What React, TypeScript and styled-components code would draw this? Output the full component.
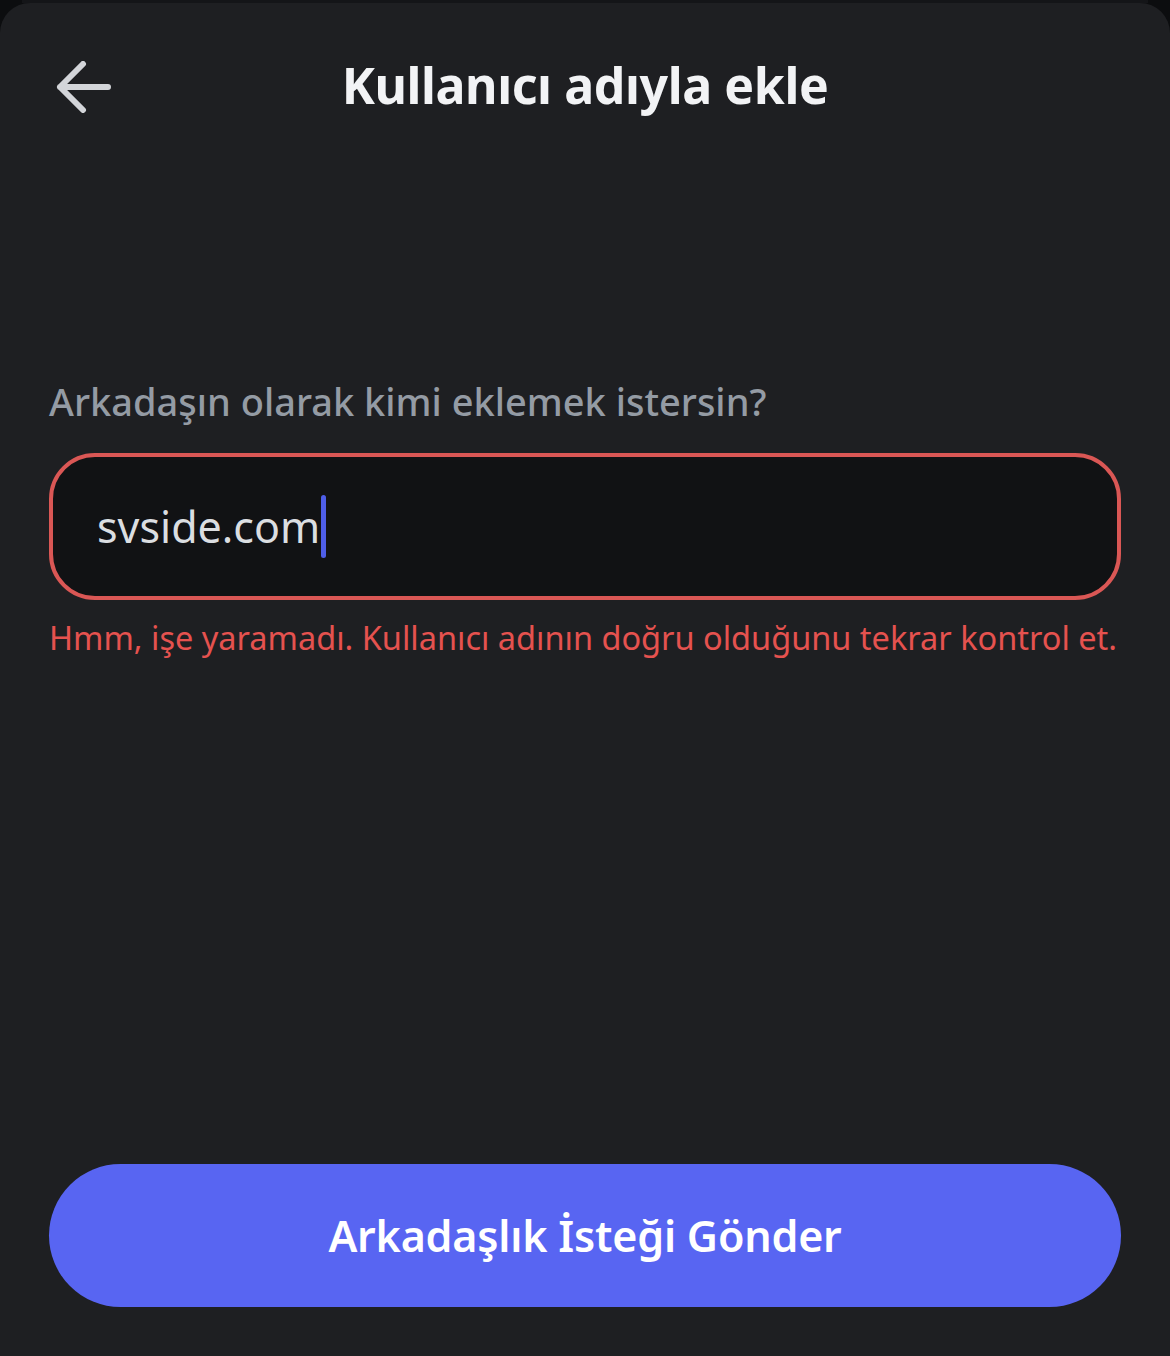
import * as React from 'react'
import styled, { createGlobalStyle } from 'styled-components'

const GlobalStyle = createGlobalStyle`
  html, body {
    margin: 0;
    padding: 0;
    background: #0c0d0f;
  }
  * {
    box-sizing: border-box;
  }
`

// 画面全体
const Screen = styled.div`
  width: 1170px;
  height: 1356px;
  display: flex;
  flex-direction: column;
  background: #0c0d0f;
  font-family: 'Noto Sans', 'Open Sans', sans-serif;
`

const BackSheet = styled.div`
  height: 3px;
  margin: 0 22px;
  background: #141518;
`

const Sheet = styled.div`
  flex: 1;
  display: flex;
  flex-direction: column;
  background: #1e1f22;
  border-radius: 30px 30px 0 0;
  padding: 0 49px 49px;
`

const Header = styled.header`
  height: 165px;
  display: grid;
  grid-template-columns: 80px 1fr 80px;
  align-items: center;
  align-content: start;
  margin-top: -3px;
  padding-top: 50px;
`

const BackButton = styled.button`
  width: 70px;
  height: 70px;
  padding: 0 0 0 7px;
  border: none;
  background: none;
  display: flex;
  align-items: center;
  justify-content: flex-start;
  color: #d3d5d9;
  transform: translateY(2px);
`

const Title = styled.h1`
  margin: 0;
  text-align: center;
  font-size: 50px;
  font-weight: 700;
  color: #f2f3f5;
  letter-spacing: -0.4px;
  line-height: 70px;
`

const Form = styled.div`
  margin-top: 213px;
  display: flex;
  flex-direction: column;
`

const Label = styled.label`
  font-size: 38px;
  font-weight: 500;
  color: #949ba4;
  line-height: 46px;
  margin-bottom: 29px;
`

const InputBox = styled.div<{ $error?: boolean }>`
  height: 147px;
  border: 4px solid ${(p) => (p.$error ? '#da5755' : '#3f4147')};
  border-radius: 46px;
  background: #111214;
  display: flex;
  align-items: center;
  padding: 0 44px;
`

const Value = styled.span`
  font-size: 43px;
  color: #dbdee1;
  line-height: 1;
`

const Caret = styled.span`
  display: inline-block;
  width: 5px;
  height: 63px;
  border-radius: 3px;
  background: #4e5ee8;
  margin-left: 1px;
`

const ErrorText = styled.div`
  margin-top: 18px;
  font-size: 32.5px;
  white-space: nowrap;
  color: #e5524f;
  line-height: 40px;
`

const Footer = styled.div`
  margin-top: auto;
`

const SubmitButton = styled.button`
  width: 100%;
  height: 143px;
  border: none;
  border-radius: 72px;
  background: #5865f2;
  color: #ffffff;
  font-family: 'Noto Sans', 'Open Sans', sans-serif;
  font-size: 43px;
  font-weight: 600;
  letter-spacing: -0.2px;
`

const ArrowIcon = () => (
  <svg width="56" height="52" viewBox="0 0 56 52" fill="none">
    <path
      d="M27 3 L4 26 L27 49 M4 26 H52"
      stroke="currentColor"
      strokeWidth="6"
      strokeLinecap="round"
      strokeLinejoin="round"
    />
  </svg>
)

export default function App() {
  const [value] = React.useState('svside.com')

  return (
    <Screen>
      <GlobalStyle />
      <BackSheet />
      <Sheet>
        <Header>
          <BackButton aria-label="Geri">
            <ArrowIcon />
          </BackButton>
          <Title>Kullanıcı adıyla ekle</Title>
          <span />
        </Header>
        <Form>
          <Label>Arkadaşın olarak kimi eklemek istersin?</Label>
          <InputBox $error>
            <Value>{value}</Value>
            <Caret />
          </InputBox>
          <ErrorText>Hmm, işe yaramadı. Kullanıcı adının doğru olduğunu tekrar kontrol et.</ErrorText>
        </Form>
        <Footer>
          <SubmitButton>Arkadaşlık İsteği Gönder</SubmitButton>
        </Footer>
      </Sheet>
    </Screen>
  )
}
